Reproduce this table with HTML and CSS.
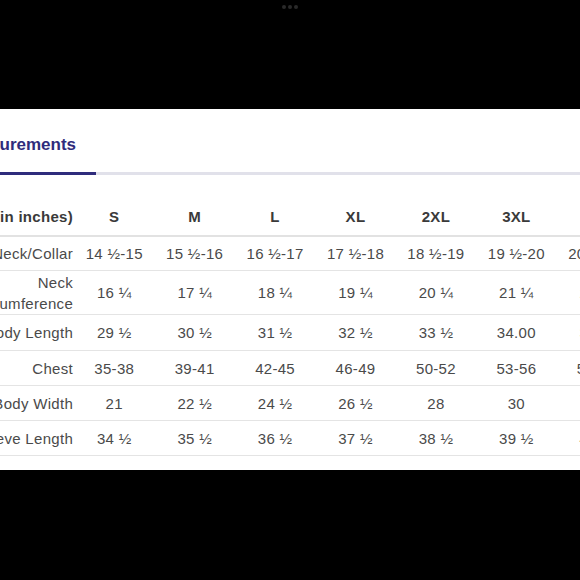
FILE: index.html
```html
<!DOCTYPE html>
<html lang="en">
<head>
<meta charset="utf-8">
<title>Size Chart</title>
<link rel="stylesheet" href="styles.css">
</head>
<body>
<div class="topbar">
  <div class="dots"><span class="dot"></span><span class="dot"></span><span class="dot"></span></div>
</div>
<div class="panel">
  <div class="tabs">
    <div class="tab">Measurements</div>
  </div>
  <div class="table-wrap">
    <table class="chart">
      <colgroup>
        <col class="col-label">
        <col class="col-size"><col class="col-size"><col class="col-size"><col class="col-size"><col class="col-size"><col class="col-size"><col class="col-size">
      </colgroup>
      <thead>
        <tr>
          <th class="label head-label">Size (in inches)</th>
          <th>S</th><th>M</th><th>L</th><th>XL</th><th>2XL</th><th>3XL</th><th>4XL</th>
        </tr>
      </thead>
      <tbody>
        <tr class="r1">
          <td class="label">Neck/Collar</td>
          <td>14 ½-15</td><td>15 ½-16</td><td>16 ½-17</td><td>17 ½-18</td><td>18 ½-19</td><td>19 ½-20</td><td>20 ½-21</td>
        </tr>
        <tr class="r2">
          <td class="label">Neck Circumference</td>
          <td>16 ¼</td><td>17 ¼</td><td>18 ¼</td><td>19 ¼</td><td>20 ¼</td><td>21 ¼</td><td>22 ¼</td>
        </tr>
        <tr class="r3">
          <td class="label">Body Length</td>
          <td>29 ½</td><td>30 ½</td><td>31 ½</td><td>32 ½</td><td>33 ½</td><td>34.00</td><td>35 ½</td>
        </tr>
        <tr>
          <td class="label">Chest</td>
          <td>35-38</td><td>39-41</td><td>42-45</td><td>46-49</td><td>50-52</td><td>53-56</td><td>57-60</td>
        </tr>
        <tr>
          <td class="label">Body Width</td>
          <td>21</td><td>22 ½</td><td>24 ½</td><td>26 ½</td><td>28</td><td>30</td><td>32</td>
        </tr>
        <tr>
          <td class="label">Sleeve Length</td>
          <td>34 ½</td><td>35 ½</td><td>36 ½</td><td>37 ½</td><td>38 ½</td><td>39 ½</td><td>40 ½</td>
        </tr>
      </tbody>
    </table>
  </div>
</div>
</body>
</html>
```
FILE: styles.css
```css
html, body {
  margin: 0;
  padding: 0;
  background: #000;
  overflow: hidden;
  width: 580px;
  height: 580px;
}

body {
  font-family: "Liberation Sans", Arial, sans-serif;
}

.topbar {
  height: 109px;
  display: flex;
  justify-content: center;
  align-items: flex-start;
}

.dots {
  display: flex;
  gap: 2px;
  margin-top: 5px;
}

.dot {
  width: 4px;
  height: 4px;
  border-radius: 50%;
  background: #2a2a2a;
}

.panel {
  background: #fff;
  height: 361px;
  overflow: hidden;
}

.tabs {
  padding-top: 26px;
  border-bottom: 3px solid #e1e1ea;
  display: flex;
}

.tab {
  margin-left: -63px;
  padding: 0 20px 17px;
  font-size: 17px;
  line-height: 20px;
  font-weight: bold;
  color: #2f2c7c;
  border-bottom: 3px solid #2f2c7c;
  margin-bottom: -3px;
  white-space: nowrap;
}

.table-wrap {
  margin-top: 22px;
  margin-left: -46px;
}

.chart {
  table-layout: fixed;
  border-collapse: collapse;
  width: 683px;
  font-size: 15px;
  letter-spacing: 0.3px;
  color: #4a4a4a;
}

.col-label { width: 120px; }
.col-size { width: 80.4px; }

.chart th,
.chart td {
  padding: 0;
  text-align: center;
  vertical-align: middle;
  white-space: nowrap;
}

.chart th {
  height: 38px;
  font-weight: bold;
  color: #3a3a3a;
  border-bottom: 2px solid #e2e2e2;
}

.chart td {
  height: 34px;
  border-bottom: 1px solid #e4e4e4;
}

.chart .label {
  text-align: right;
  padding-right: 1px;
}

.chart .r1 td { height: 33px; }

.chart .r2 td {
  height: 43px;
  line-height: 21px;
}

.chart .r2 .label {
  white-space: normal;
}

.chart .r3 td { height: 35px; }
```
